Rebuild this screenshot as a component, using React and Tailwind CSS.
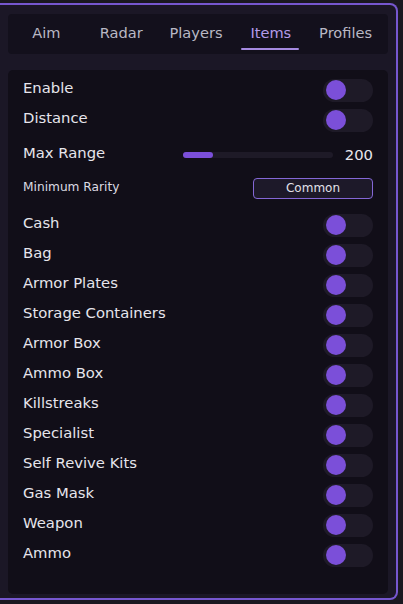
import React from "react";

const tabs = ["Aim", "Radar", "Players", "Items", "Profiles"];
const items = [
  "Cash",
  "Bag",
  "Armor Plates",
  "Storage Containers",
  "Armor Box",
  "Ammo Box",
  "Killstreaks",
  "Specialist",
  "Self Revive Kits",
  "Gas Mask",
  "Weapon",
  "Ammo",
];

function Toggle() {
  return (
    <div className="w-[50px] h-[23px] rounded-full bg-[#1e1a27] flex items-center pl-[3px]">
      <div className="w-[20px] h-[20px] rounded-full bg-[#7b4fd9]" />
    </div>
  );
}

function Row({ label }) {
  return (
    <div className="h-[30px] flex items-center justify-between pr-[15px]">
      <span className="text-[14.8px] leading-[18px] pb-[4px] text-[#e6e5ec]">{label}</span>
      <Toggle />
    </div>
  );
}

export default function App() {
  return (
    <div
      className="w-[403px] h-[604px] bg-[#1a1820] overflow-hidden"
      style={{ fontFamily: '"DejaVu Sans", Verdana, sans-serif' }}
    >
      <div className="mt-[3px] w-[398px] h-[597px] bg-[#1b1726] border-t-2 border-r-2 border-b-2 border-[#7657cf] rounded-tr-[8px] rounded-br-[8px] pl-[8px] pr-[8px] pt-[9px]">
        <div className="h-[40px] w-[380px] rounded-[4px] bg-[#13101c] grid grid-cols-5 pr-[5px] pl-[1px]">
          {tabs.map((t) => (
            <div key={t} className="flex items-center justify-center relative">
              <span
                className={
                  "text-[14.6px] leading-[18px] pb-[2px] " +
                  (t === "Items" ? "text-[#b49be9]" : "text-[#b9b8c4]")
                }
              >
                {t}
              </span>
              {t === "Items" && (
                <div className="absolute left-[8px] right-[9px] bottom-[4px] h-[2px] bg-[#a58ae0] rounded-full" />
              )}
            </div>
          ))}
        </div>
        <div className="mt-[16px] w-[380px] h-[524px] rounded-[5px] bg-[#110e18] pl-[15px] pt-[5px]">
          <Row label="Enable" />
          <Row label="Distance" />
          <div className="h-[40px] flex items-center pr-[15px]">
            <span className="text-[14.8px] leading-[18px] pb-[4px] text-[#e6e5ec] w-[160px]">Max Range</span>
            <div className="w-[150px] h-[6px] rounded-full bg-[#1e1a27] relative">
              <div className="absolute left-0 top-0 h-[6px] w-[30px] rounded-full bg-[#7b4fd9]" />
            </div>
            <span className="ml-auto text-[14.8px] leading-[18px] text-[#e8e7ee]">200</span>
          </div>
          <div className="h-[26px] flex items-center justify-between pr-[15px]">
            <span className="text-[12.2px] leading-[16px] pb-[2px] text-[#dcdbe3]">Minimum Rarity</span>
            <div className="w-[120px] h-[21px] rounded-[4px] border border-[#8467d6] bg-[#1d1929] flex items-center justify-center">
              <span className="text-[12px] leading-[16px] text-[#e2e1e9]">Common</span>
            </div>
          </div>
          <div className="mt-[9px]">
            {items.map((it) => (
              <Row key={it} label={it} />
            ))}
          </div>
        </div>
      </div>
    </div>
  );
}
